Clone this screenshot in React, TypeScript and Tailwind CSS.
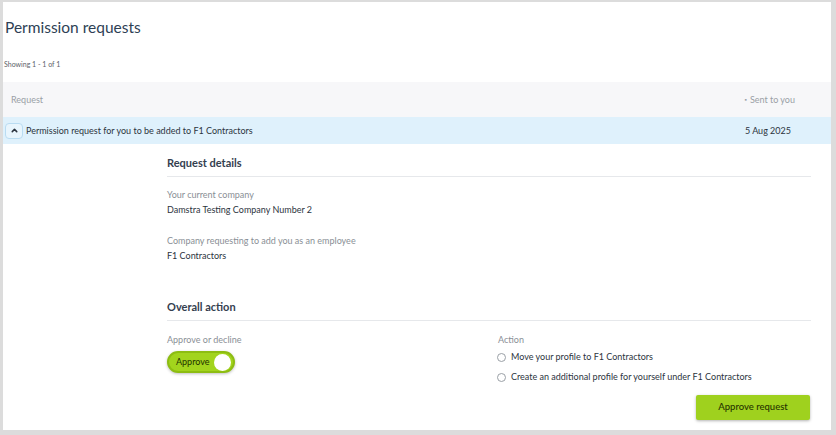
import { ChevronUp } from 'lucide-react';

const font = { fontFamily: 'Lato, "Open Sans", sans-serif' };

function Field({ label, value }: { label: string; value: string }) {
  return (
    <div className="flex flex-col gap-[3px]">
      <span className="text-[9px] leading-[12px] text-[#8a8f96]">{label}</span>
      <span className="text-[9px] leading-[12px] text-[#2c3440]">{value}</span>
    </div>
  );
}

function Radio({ label }: { label: string }) {
  return (
    <label className="flex items-center gap-[5px] text-[9px] leading-[12px] text-[#2c3440]">
      <span className="w-[9px] h-[9px] rounded-full border border-[#9aa0a6] bg-white" />
      {label}
    </label>
  );
}

export default function App() {
  return (
    <div className="w-[836px] h-[435px] bg-[#dcdcdc] pt-[2px] pl-[3px] pr-[5px] pb-[5px]" style={font}>
      <div className="h-full bg-white overflow-hidden">
        <h1 className="text-[15.5px] text-[#2e3f55] pl-[2px] pt-[14px] leading-[22px]">
          Permission requests
        </h1>
        <p className="text-[7px] text-[#5b6169] pl-[1px] mt-[21px] leading-[10px]">Showing 1 - 1 of 1</p>

        <div className="mt-[13px] h-[35px] bg-[#f7f7f9] flex items-center justify-between px-[8px] text-[9px] text-[#9a9fa6]">
          <span>Request</span>
          <span className="flex items-center gap-[3px] pr-[28px]">
            <span className="text-[6px]">▪</span>Sent to you
          </span>
        </div>

        <div className="h-[27px] bg-[#dff1fc] flex items-center justify-between pl-[2px] pr-[40px] text-[9px] text-[#2c3440]">
          <div className="flex items-center gap-[3px]">
            <span className="w-[18px] h-[16px] rounded-[4px] border border-[#b9dcf2] bg-[#e8f5fd] flex items-center justify-center">
              <ChevronUp size={9} strokeWidth={4} className="text-[#2c3440]" />
            </span>
            <span>Permission request for you to be added to F1 Contractors</span>
          </div>
          <span>5 Aug 2025</span>
        </div>

        <div className="pl-[164px] pr-[20px] pt-[12px]">
          <h2 className="text-[11px] leading-[14px] font-bold text-[#34404f] pb-[6px] border-b border-[#e6e8eb]">Request details</h2>
          <div className="flex flex-col gap-[19px] mt-[12px]">
            <Field label="Your current company" value="Damstra Testing Company Number 2" />
            <Field label="Company requesting to add you as an employee" value="F1 Contractors" />
          </div>

          <h2 className="text-[11px] leading-[14px] font-bold text-[#34404f] pb-[6px] border-b border-[#e6e8eb] mt-[38px]">Overall action</h2>
          <div className="grid grid-cols-[331px_1fr] mt-[13px]">
            <div className="flex flex-col gap-[5px]">
              <span className="text-[9px] leading-[12px] text-[#8a8f96]">Approve or decline</span>
              <button className="w-[68px] h-[22px] rounded-full bg-[#a2d41d] border-2 border-[#8dbd12] shadow-[0_1px_3px_rgba(0,0,0,0.25)] flex items-center justify-between pl-[7px] pr-[2px]">
                <span className="text-[9px] text-[#223000]">Approve</span>
                <span className="w-[17px] h-[17px] rounded-full bg-white" />
              </button>
            </div>
            <div className="flex flex-col gap-[5px]">
              <span className="text-[9px] leading-[12px] text-[#8a8f96]">Action</span>
              <div className="flex flex-col gap-[8px] -ml-[1px]">
                <Radio label="Move your profile to F1 Contractors" />
                <Radio label="Create an additional profile for yourself under F1 Contractors" />
              </div>
            </div>
          </div>

          <div className="flex justify-end mt-[12px] pr-[1px]">
            <button className="w-[114px] h-[25px] rounded-[2px] bg-[#9fd11e] shadow-[0_1px_3px_rgba(0,0,0,0.3)] text-[9.5px] font-medium text-[#263300]">
              Approve request
            </button>
          </div>
        </div>
      </div>
    </div>
  );
}
